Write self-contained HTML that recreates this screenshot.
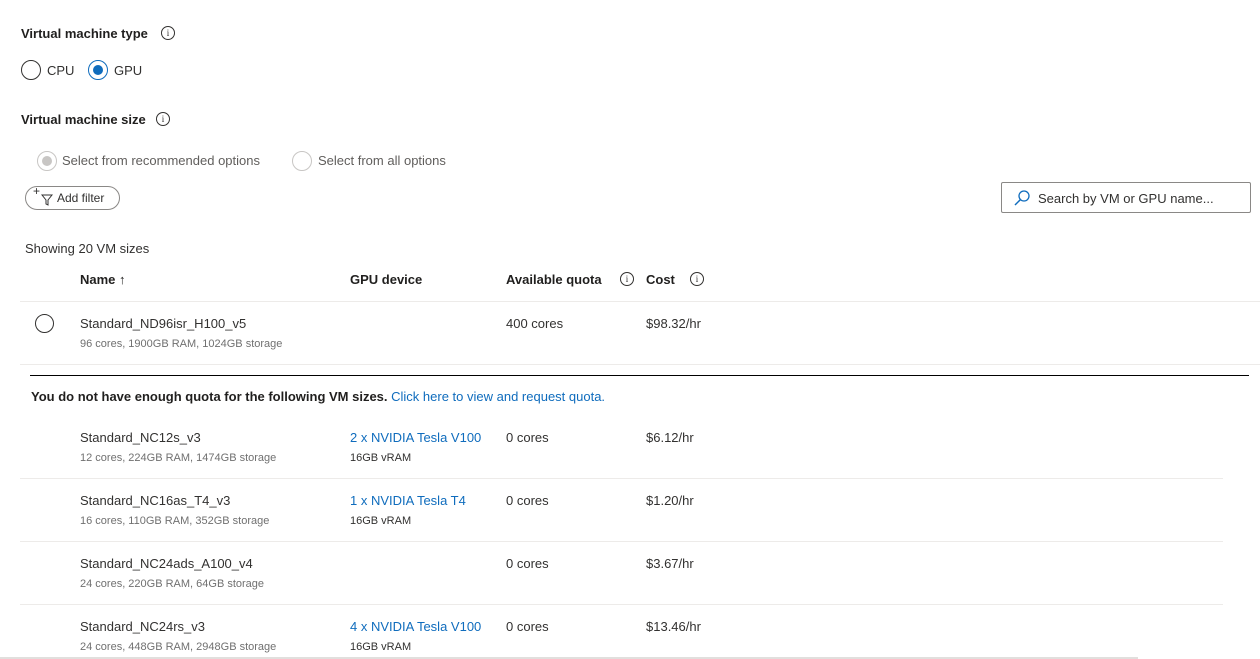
<!DOCTYPE html>
<html><head><meta charset="utf-8"><style>
*{margin:0;padding:0;box-sizing:border-box}
body{width:1260px;height:659px;overflow:hidden;background:#fff;font-family:"Liberation Sans",sans-serif;color:#323130;position:relative;font-size:13px}
.a{position:absolute;white-space:nowrap}
.b{font-weight:bold;color:#201f1e}
.s{font-size:11px;color:#707070}
.l{color:#0f6cbd}
.info{position:absolute;width:14px;height:14px;border:1px solid #323130;border-radius:50%;font-size:9px;text-align:center;line-height:12px;font-family:"Liberation Serif",serif}
.r{position:absolute;border-radius:50%}
.hl{position:absolute;height:1px;background:#edebe9}
</style></head><body>
<div class="a b" style="left:21px;top:26px">Virtual machine type</div>
<div class="info" style="left:161px;top:26px">i</div>
<div class="r" style="left:21px;top:60px;width:20px;height:20px;border:1px solid #323130"></div>
<div class="a" style="left:47px;top:63px">CPU</div>
<div class="r" style="left:88px;top:60px;width:20px;height:20px;border:1px solid #0f6cbd"></div>
<div class="r" style="left:93px;top:65px;width:10px;height:10px;background:#0f6cbd"></div>
<div class="a" style="left:114px;top:63px">GPU</div>
<div class="a b" style="left:21px;top:112px">Virtual machine size</div>
<div class="info" style="left:156px;top:112px">i</div>
<div class="r" style="left:37px;top:151px;width:20px;height:20px;border:1px solid #c8c6c4"></div>
<div class="r" style="left:42px;top:156px;width:10px;height:10px;background:#c8c6c4"></div>
<div class="a" style="left:62px;top:153px;color:#605e5c">Select from recommended options</div>
<div class="r" style="left:292px;top:151px;width:20px;height:20px;border:1px solid #c8c6c4"></div>
<div class="a" style="left:318px;top:153px;color:#605e5c">Select from all options</div>
<div class="a" style="left:25px;top:186px;width:95px;height:24px;border:1px solid #8a8886;border-radius:12px"></div>
<div class="a" style="left:33px;top:184px;font-size:12px">+</div>
<svg class="a" style="left:41px;top:194px" width="12" height="12" viewBox="0 0 12 12"><path d="M1 1h10L7 6v5L5 10V6z" fill="none" stroke="#323130"/></svg>
<div class="a" style="left:57px;top:191px;font-size:12px">Add filter</div>
<div class="a" style="left:1001px;top:182px;width:250px;height:31px;border:1px solid #8a8886;border-radius:2px"></div>
<svg class="a" style="left:1013px;top:189px" width="18" height="18" viewBox="0 0 18 18"><circle cx="11" cy="7" r="5" fill="none" stroke="#0f6cbd" stroke-width="1.3"/><path d="M7.5 10.5L2 16" stroke="#0f6cbd" stroke-width="1.5"/></svg>
<div class="a" style="left:1038px;top:191px">Search by VM or GPU name...</div>
<div class="a" style="left:25px;top:241px">Showing 20 VM sizes</div>
<div class="a b" style="left:80px;top:272px">Name ↑</div>
<div class="a b" style="left:350px;top:272px">GPU device</div>
<div class="a b" style="left:506px;top:272px">Available quota</div>
<div class="info" style="left:620px;top:272px">i</div>
<div class="a b" style="left:646px;top:272px">Cost</div>
<div class="info" style="left:690px;top:272px">i</div>
<div class="hl" style="left:20px;top:301px;width:1240px"></div>
<div class="r" style="left:35px;top:314px;width:19px;height:19px;border:1px solid #323130"></div>
<div class="a" style="left:80px;top:316px">Standard_ND96isr_H100_v5</div>
<div class="a s" style="left:80px;top:338px">96 cores, 1900GB RAM, 1024GB storage</div>
<div class="a" style="left:506px;top:316px">400 cores</div>
<div class="a" style="left:646px;top:316px">$98.32/hr</div>
<div class="hl" style="left:20px;top:364px;width:1240px"></div>
<div class="a" style="left:30px;top:375px;width:1219px;height:1px;background:#000"></div>
<div class="a b" style="left:31px;top:389px">You do not have enough quota for the following VM sizes. <span class="l" style="font-weight:normal">Click here to view and request quota.</span></div>

<div class="a" style="left:80px;top:430px">Standard_NC12s_v3</div>
<div class="a s" style="left:80px;top:452px">12 cores, 224GB RAM, 1474GB storage</div>
<div class="a l" style="left:350px;top:430px">2 x NVIDIA Tesla V100</div>
<div class="a s" style="left:350px;top:452px;color:#323130">16GB vRAM</div>
<div class="a" style="left:506px;top:430px">0 cores</div>
<div class="a" style="left:646px;top:430px">$6.12/hr</div>
<div class="hl" style="left:20px;top:478px;width:1203px"></div>

<div class="a" style="left:80px;top:493px">Standard_NC16as_T4_v3</div>
<div class="a s" style="left:80px;top:515px">16 cores, 110GB RAM, 352GB storage</div>
<div class="a l" style="left:350px;top:493px">1 x NVIDIA Tesla T4</div>
<div class="a s" style="left:350px;top:515px;color:#323130">16GB vRAM</div>
<div class="a" style="left:506px;top:493px">0 cores</div>
<div class="a" style="left:646px;top:493px">$1.20/hr</div>
<div class="hl" style="left:20px;top:541px;width:1203px"></div>

<div class="a" style="left:80px;top:556px">Standard_NC24ads_A100_v4</div>
<div class="a s" style="left:80px;top:578px">24 cores, 220GB RAM, 64GB storage</div>
<div class="a" style="left:506px;top:556px">0 cores</div>
<div class="a" style="left:646px;top:556px">$3.67/hr</div>
<div class="hl" style="left:20px;top:604px;width:1203px"></div>

<div class="a" style="left:80px;top:619px">Standard_NC24rs_v3</div>
<div class="a s" style="left:80px;top:641px">24 cores, 448GB RAM, 2948GB storage</div>
<div class="a l" style="left:350px;top:619px">4 x NVIDIA Tesla V100</div>
<div class="a s" style="left:350px;top:641px;color:#323130">16GB vRAM</div>
<div class="a" style="left:506px;top:619px">0 cores</div>
<div class="a" style="left:646px;top:619px">$13.46/hr</div>
<div class="a" style="left:0;top:657px;width:1138px;height:2px;background:#e1dfdd"></div>
</body></html>
